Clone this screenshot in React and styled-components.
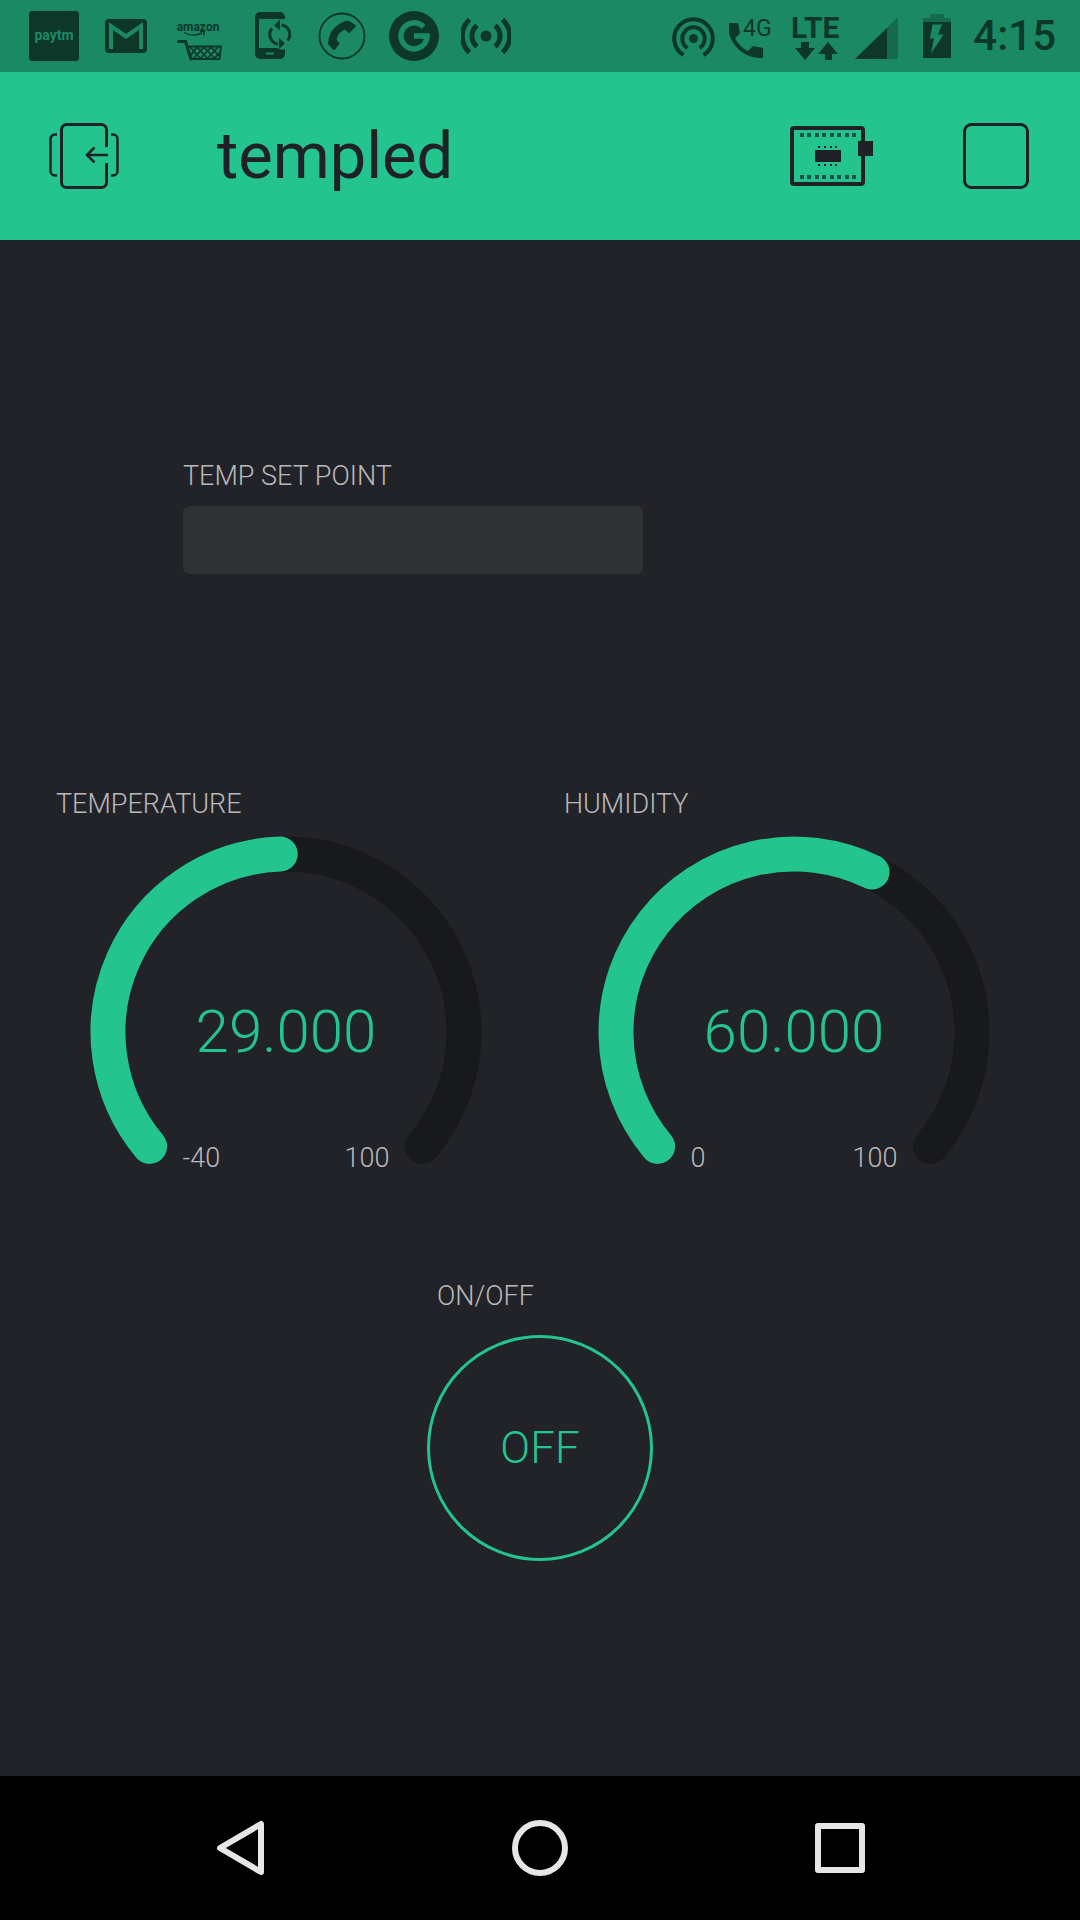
import React, { useState } from "react";
import styled, { createGlobalStyle } from "styled-components";

const color = {
  accent: "#24c48e",
  status: "#1b8a64",
  statusInk: "#0c3729",
  statusDim: "#146a4d",
  ink: "#202126",
  page: "#222328",
  track: "#18191c",
  field: "#303134",
  label: "#b9b9bb",
  nav: "#e6e6e6",
};

const GlobalStyle = createGlobalStyle`
  * { box-sizing: border-box; }
  body {
    margin: 0;
    background: ${color.page};
    font-family: Roboto, "Open Sans", sans-serif;
  }
  svg { display: block; flex: none; }
`;

const Screen = styled.div`
  min-height: 100vh;
  display: flex;
  flex-direction: column;
`;

const StatusBar = styled.div`
  height: 72px;
  padding: 0 24px 0 29px;
  display: flex;
  align-items: center;
  justify-content: space-between;
  background: ${color.status};
  color: ${color.statusInk};
`;

const StatusGroup = styled.div`
  display: flex;
  align-items: center;
  gap: ${(p) => p.$gap}px;
`;

const Clock = styled.time`
  font-size: 42px;
  line-height: 48px;
  font-weight: 500;
`;

const AppBar = styled.header`
  height: 168px;
  padding: 0 51px 0 49px;
  display: flex;
  align-items: center;
  background: ${color.accent};
  color: ${color.ink};
`;

const Title = styled.h1`
  flex: 1;
  margin: 0 0 0 98px;
  font-size: 65px;
  line-height: 80px;
  font-weight: 400;
`;

const BarActions = styled.div`
  display: flex;
  align-items: center;
  gap: 90px;
`;

const IconButton = styled.button`
  display: grid;
  place-items: center;
  padding: 0;
  border: 0;
  background: none;
  color: inherit;
`;

const Board = styled.main`
  flex: 1;
  padding: 220px 56px 200px;
  display: grid;
  grid-template-columns: repeat(8, minmax(0, 1fr));
  column-gap: 48px;
  align-content: start;
`;

const Widget = styled.section`
  grid-column: ${(p) => p.$column} / span ${(p) => p.$span};
  margin-bottom: ${(p) => p.$after || 0}px;
  display: flex;
  flex-direction: column;
  gap: ${(p) => p.$gap || 16}px;
`;

const Label = styled.label`
  font-size: 27px;
  line-height: 32px;
  font-weight: 300;
  color: ${color.label};
  white-space: nowrap;
`;

const Field = styled.input`
  width: 100%;
  height: 68px;
  padding: 0 20px;
  border: 0;
  border-radius: 6px;
  background: ${color.field};
  color: ${color.label};
  font: inherit;
  font-size: 27px;
`;

const Dial = styled.div`
  display: grid;

  > * {
    grid-area: 1 / 1;
  }
`;

const DialArt = styled.svg`
  width: 100%;
  height: auto;
`;

const Readout = styled.div`
  display: flex;
  flex-direction: column;
  align-items: center;
  justify-content: flex-end;
  gap: 74px;
`;

const Value = styled.output`
  font-size: 60px;
  line-height: 72px;
  font-weight: 300;
  color: ${color.accent};
`;

const Range = styled.div`
  width: 45%;
  display: flex;
  justify-content: space-between;
  font-size: 27px;
  line-height: 32px;
  font-weight: 300;
  color: ${color.label};
`;

const RoundButton = styled.button`
  align-self: center;
  width: calc(100% + 20px);
  aspect-ratio: 1;
  padding: 0;
  border: 3px solid ${color.accent};
  border-radius: 50%;
  background: none;
  color: ${color.accent};
  font-family: inherit;
  font-size: 44px;
  line-height: 48px;
  font-weight: 300;
`;

const NavBar = styled.nav`
  height: 144px;
  padding: 0 90px;
  display: grid;
  grid-template-columns: repeat(3, 1fr);
  background: #000;
  color: ${color.nav};
`;

const SlotIcon = ({ width = 50, children }) => (
  <svg width={width} height="50" viewBox={`0 0 ${width} 50`} fill="currentColor" aria-hidden="true">
    {children}
  </svg>
);

const PaytmIcon = () => (
  <SlotIcon>
    <rect width="50" height="50" rx="3" />
    <text x="25" y="29" textAnchor="middle" fontSize="14" fontWeight="700" fill={color.status}>
      paytm
    </text>
  </SlotIcon>
);

const MailIcon = () => (
  <SlotIcon>
    <rect x="4" y="8" width="42" height="34" rx="4" />
    <path d="M10 38V15l15 10.500 15-10.500v23" fill="none" stroke={color.status} strokeWidth="4" />
  </SlotIcon>
);

const AmazonIcon = () => (
  <SlotIcon>
    <text x="25" y="20" textAnchor="middle" fontSize="12" fontWeight="700">
      amazon
    </text>
    <g fill="none" stroke="currentColor">
      <path d="M11 21.500q9 5 18 .5M27 20.500l4.500 0-1 4" strokeWidth="1.400" />
      <path d="M5.500 30.500h7l5.500 17.500" strokeWidth="3" strokeLinecap="round" />
      <path d="M15 35.500h33l-1.500 12.500h-28" strokeWidth="1.800" />
      <path
        d="M17 36l11 12M24 36l11 12M31 36l11 12M38 36l9 10M24 36l-6 8M31 36l-11 12M38 36l-11 12M45 36l-11 12M48 40l-7 8"
        strokeWidth="1.600"
      />
    </g>
  </SlotIcon>
);

const SyncPhoneIcon = () => (
  <SlotIcon>
    <path d="M15 1h20a5 5 0 0 1 5 5v2H14v29h18q4 3 8 1v5a5 5 0 0 1-5 5H15a5 5 0 0 1-5-5V6a5 5 0 0 1 5-5z" />
    <path d="M21 42.500h8" stroke={color.status} strokeWidth="2" />
    <g fill="none" stroke="currentColor" strokeWidth="3">
      <path d="M27 17.500a9.500 9.500 0 0 0 6 15.500" />
      <path d="M42.500 29.500a9.500 9.500 0 0 0-6-15.500" />
    </g>
    <path d="M29 14.500l6-6v11zM40 32.500l-6-5.500v11z" />
  </SlotIcon>
);

const CallIcon = () => (
  <SlotIcon>
    <circle cx="25" cy="25" r="22.500" fill="none" stroke="currentColor" strokeWidth="1.800" />
    <path d="M11 33Q12 17 26 11q4-2 7-.5L38.500 14q.8.800 0 1.800L33 21.500q-1 .8-2 0L28 18.500q-7 3-8.500 10l2.500 3q.8 1 0 2l-4 5q-1 1-2 .3z" />
  </SlotIcon>
);

const GoogleIcon = () => (
  <SlotIcon>
    <circle cx="25" cy="25" r="25" />
    <path d="M34.500 16A13 13 0 1 0 38 25H25" fill="none" stroke={color.status} strokeWidth="5.500" />
  </SlotIcon>
);

const BroadcastIcon = () => (
  <SlotIcon>
    <circle cx="25" cy="25" r="5.500" />
    <g fill="none" stroke="currentColor" strokeWidth="5">
      <path d="M16 14.500a13.500 13.500 0 0 0 0 21M34 14.500a13.500 13.500 0 0 1 0 21" />
      <path d="M8.500 8.500a22.500 22.500 0 0 0 0 33M41.500 8.500a22.500 22.500 0 0 1 0 33" />
    </g>
  </SlotIcon>
);

const HotspotIcon = () => (
  <SlotIcon width={61}>
    <circle cx="25.500" cy="27.500" r="4.500" />
    <g fill="none" stroke="currentColor" strokeWidth="4">
      <path d="M19.500 37a11.200 11.200 0 1 1 12 0" />
      <path d="M15.500 44a19.300 19.300 0 1 1 20 0" />
    </g>
  </SlotIcon>
);

const Phone4GIcon = () => (
  <SlotIcon width={61}>
    <path
      transform="translate(-6.850 6.150) scale(1.950)"
      d="M6.620 10.790c1.440 2.830 3.760 5.140 6.590 6.590l2.200-2.200c.27-.27.67-.36 1.020-.24 1.120.37 2.330.57 3.570.57.55 0 1 .45 1 1V20c0 .55-.45 1-1 1-9.390 0-17-7.610-17-17 0-.55.45-1 1-1h3.500c.55 0 1 .45 1 1 0 1.250.2 2.450.57 3.570.11.35.03.74-.25 1.020l-2.200 2.200z"
    />
    <text x="14" y="25" fontSize="23">
      4G
    </text>
  </SlotIcon>
);

const LteIcon = () => (
  <SlotIcon width={61}>
    <text x="1" y="27" fontSize="30" fontWeight="700">
      LTE
    </text>
    <path d="M11 31h8v6h6L15 49 5 37h6zM38 31l10 12h-6v6h-7v-6h-7z" />
  </SlotIcon>
);

const SignalIcon = () => (
  <SlotIcon width={61}>
    <path d="M4 48L47 6v42z" fill={color.statusDim} />
    <path d="M4 48L36 17v31z" />
  </SlotIcon>
);

const BatteryIcon = () => (
  <SlotIcon width={61}>
    <path d="M11 11V7h7V3h14v4h7v4z" fill={color.statusDim} />
    <path d="M11 11h28v36H11z" />
    <path d="M20.500 13.500H30l-4 10h5.500L19 42.500l3-15h-4z" fill={color.status} />
  </SlotIcon>
);

const ExitIcon = () => (
  <svg width="70" height="66" viewBox="0 0 70 66" fill="none" stroke="currentColor" strokeWidth="3" aria-hidden="true">
    <path d="M57.500 24V6.500a5 5 0 0 0-5-5h-35a5 5 0 0 0-5 5v53a5 5 0 0 0 5 5h35a5 5 0 0 0 5-5V40" />
    <path d="M59 32H38M45.500 24.500L38 32l7.500 7.500" strokeWidth="2.500" />
    <path d="M8 11.500H6A4.500 4.500 0 0 0 1.500 16v32A4.500 4.500 0 0 0 6 52.500h2M62 11.500h2a4.500 4.500 0 0 1 4.500 4.500v32a4.500 4.500 0 0 1-4.500 4.500h-2" strokeWidth="2.500" />
  </svg>
);

const pinColumns = [10, 17, 25, 32, 40, 47, 55, 62];
const legColumns = [28, 34, 40, 45];

const BoardIcon = () => (
  <svg width="83" height="60" viewBox="0 0 83 60" fill="currentColor" aria-hidden="true">
    <rect x="2" y="2" width="71" height="56" rx="2" fill="none" stroke="currentColor" strokeWidth="4" />
    <rect x="68" y="15" width="15" height="15" />
    <rect x="25" y="24" width="26" height="12" />
    {pinColumns.map((x) => (
      <g key={x} opacity="0.7">
        <rect x={x} y="7" width="4" height="4" />
        <rect x={x} y="49" width="4" height="4" />
      </g>
    ))}
    {legColumns.map((x) => (
      <g key={x}>
        <rect x={x} y="20" width="2" height="2" />
        <rect x={x} y="38" width="2" height="2" />
      </g>
    ))}
  </svg>
);

const StopIcon = () => (
  <svg width="66" height="66" viewBox="0 0 66 66" fill="none" aria-hidden="true">
    <rect x="1.500" y="1.500" width="63" height="63" rx="7" stroke="currentColor" strokeWidth="3" />
  </svg>
);

const NavIcon = ({ children }) => (
  <svg width="56" height="56" viewBox="0 0 56 56" fill="none" stroke="currentColor" strokeWidth="6" strokeLinejoin="round" aria-hidden="true">
    {children}
  </svg>
);

const DIAL = { cx: 230, cy: 196, r: 178, sweep: 260 };

function dialPoint(fraction) {
  const angle = ((fraction - 0.5) * DIAL.sweep * Math.PI) / 180;
  return [DIAL.cx + DIAL.r * Math.sin(angle), DIAL.cy - DIAL.r * Math.cos(angle)];
}

function dialArc(fraction) {
  const [x0, y0] = dialPoint(0);
  const [x1, y1] = dialPoint(fraction);
  const large = fraction * DIAL.sweep > 180 ? 1 : 0;
  return `M${x0} ${y0}A${DIAL.r} ${DIAL.r} 0 ${large} 1 ${x1} ${y1}`;
}

function Gauge({ id, label, column, value, min, max }) {
  return (
    <Widget $column={column} $span={4} $after={106}>
      <Label htmlFor={id}>{label}</Label>
      <Dial>
        <DialArt viewBox="0 0 460 338" fill="none" strokeWidth="35" strokeLinecap="round" aria-hidden="true">
          <path d={dialArc(1)} stroke={color.track} />
          <path d={dialArc((value - min) / (max - min))} stroke={color.accent} />
        </DialArt>
        <Readout>
          <Value id={id}>{value.toFixed(3)}</Value>
          <Range>
            <span>{min}</span>
            <span>{max}</span>
          </Range>
        </Readout>
      </Dial>
    </Widget>
  );
}

export default function App() {
  const [on, setOn] = useState(false);
  const [setPoint, setSetPoint] = useState("");

  return (
    <Screen>
      <GlobalStyle />
      <StatusBar>
        <StatusGroup $gap={22}>
          <PaytmIcon />
          <MailIcon />
          <AmazonIcon />
          <SyncPhoneIcon />
          <CallIcon />
          <GoogleIcon />
          <BroadcastIcon />
        </StatusGroup>
        <StatusGroup $gap={0}>
          <HotspotIcon />
          <Phone4GIcon />
          <LteIcon />
          <SignalIcon />
          <BatteryIcon />
          <Clock>4:15</Clock>
        </StatusGroup>
      </StatusBar>

      <AppBar>
        <IconButton aria-label="Exit project">
          <ExitIcon />
        </IconButton>
        <Title>templed</Title>
        <BarActions>
          <IconButton aria-label="Device">
            <BoardIcon />
          </IconButton>
          <IconButton aria-label="Stop">
            <StopIcon />
          </IconButton>
        </BarActions>
      </AppBar>

      <Board>
        <Widget $column={2} $span={4} $gap={14} $after={214}>
          <Label htmlFor="set-point">TEMP SET POINT</Label>
          <Field id="set-point" value={setPoint} onChange={(e) => setSetPoint(e.target.value)} />
        </Widget>
        <Gauge id="temperature" label="TEMPERATURE" column={1} value={29} min={-40} max={100} />
        <Gauge id="humidity" label="HUMIDITY" column={5} value={60} min={0} max={100} />
        <Widget $column={4} $span={2} $gap={23}>
          <Label htmlFor="power">ON/OFF</Label>
          <RoundButton id="power" aria-pressed={on} onClick={() => setOn(!on)}>
            {on ? "ON" : "OFF"}
          </RoundButton>
        </Widget>
      </Board>

      <NavBar>
        <IconButton aria-label="Back">
          <NavIcon>
            <path d="M49 4v48L8 28z" />
          </NavIcon>
        </IconButton>
        <IconButton aria-label="Home">
          <NavIcon>
            <circle cx="28" cy="28" r="25" />
          </NavIcon>
        </IconButton>
        <IconButton aria-label="Recent apps">
          <NavIcon>
            <rect x="6" y="6" width="44" height="44" />
          </NavIcon>
        </IconButton>
      </NavBar>
    </Screen>
  );
}
